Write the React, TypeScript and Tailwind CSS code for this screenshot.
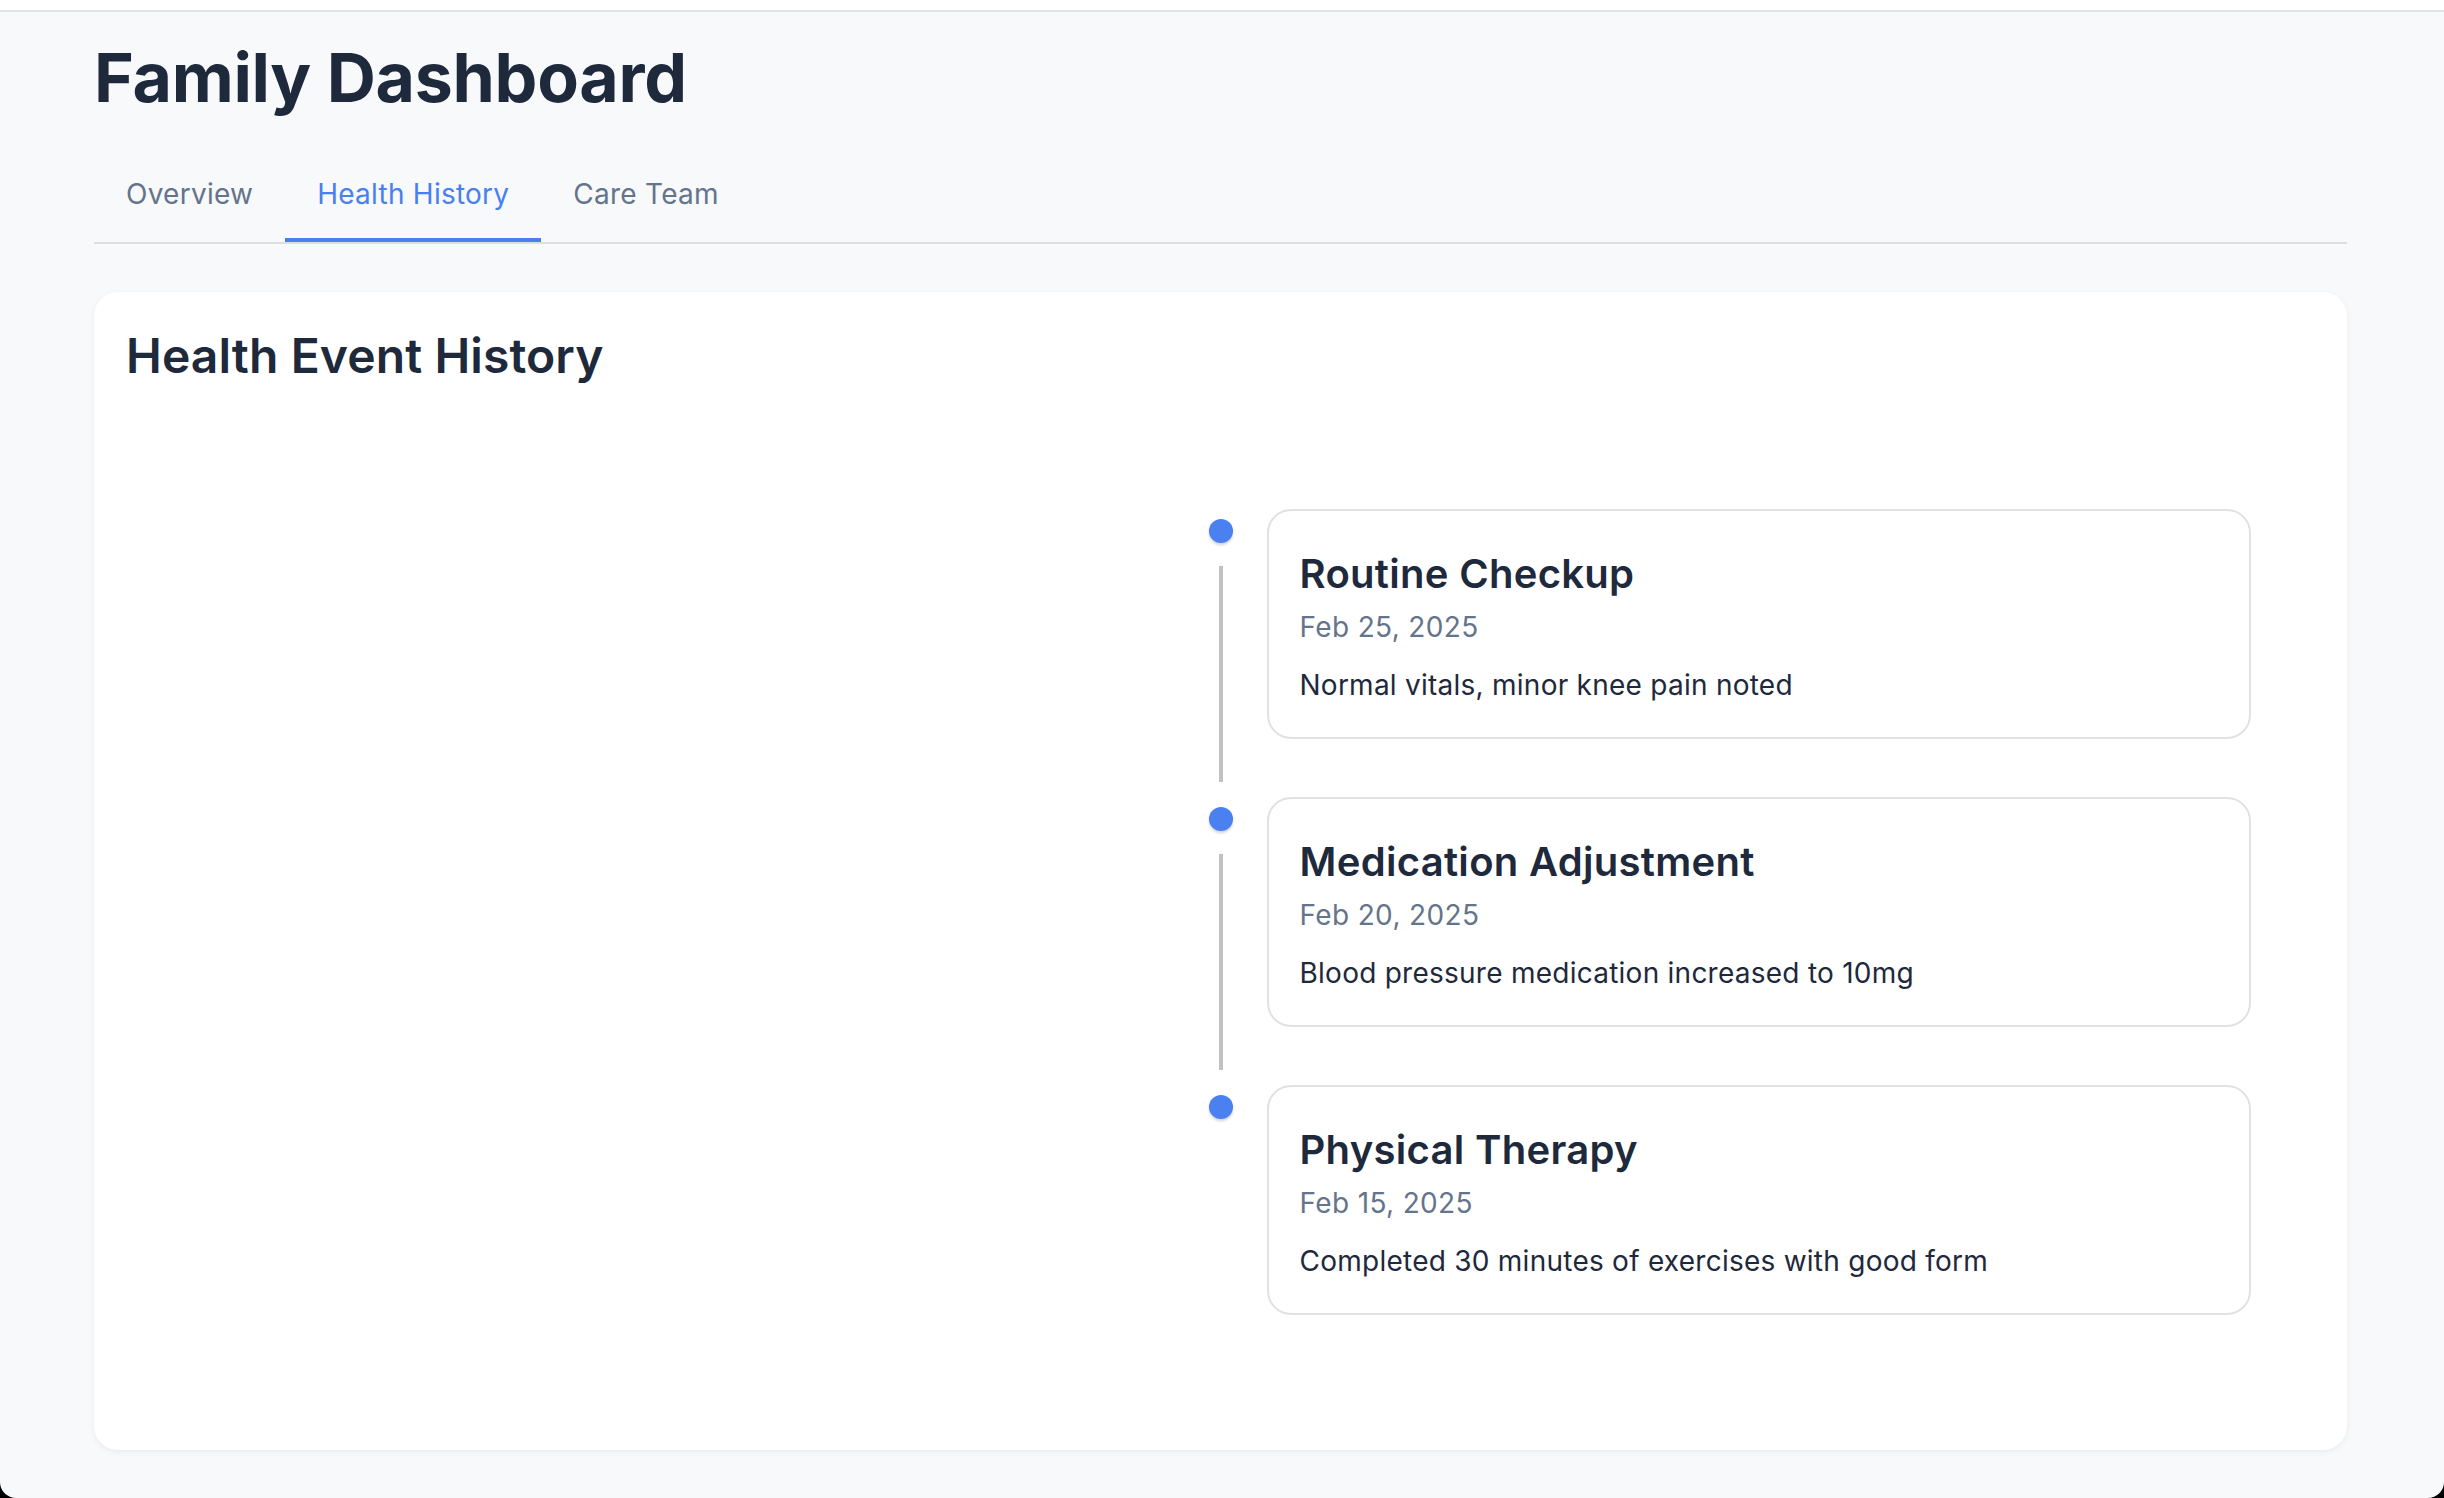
import { useState } from "react";

interface HealthEvent {
  id: number;
  title: string;
  date: string;
  note: string;
}

const events: HealthEvent[] = [
  { id: 1, title: "Routine Checkup", date: "Feb 25, 2025", note: "Normal vitals, minor knee pain noted" },
  { id: 2, title: "Medication Adjustment", date: "Feb 20, 2025", note: "Blood pressure medication increased to 10mg" },
  { id: 3, title: "Physical Therapy", date: "Feb 15, 2025", note: "Completed 30 minutes of exercises with good form" },
];

const tabs = ["Overview", "Health History", "Care Team"];

export default function App() {
  const [activeTab, setActiveTab] = useState("Health History");

  return (
    <div className="min-h-screen bg-black font-['Inter','Noto_Sans',sans-serif]">
      <div className="min-h-screen bg-[#f8f9fb] rounded-b-[16px] overflow-hidden">
        <div className="h-[12px] bg-white border-b-2 border-[#e3e4e6]" />

        <main className="pl-[94px] pr-[97px] pt-[25px] pb-[47px]">
          <h1 className="text-[68px] leading-[80px] font-bold text-[#1e293b] tracking-[-0.3px]">
            Family Dashboard
          </h1>

          {/* tabs */}
          <nav className="mt-[33px] flex border-b-2 border-[#dcdee2]">
            {tabs.map((tab) => (
              <button
                key={tab}
                onClick={() => setActiveTab(tab)}
                className={
                  activeTab === tab
                    ? "px-[32px] pt-[24px] pb-[24px] text-[28px] leading-[40px] tracking-[0.25px] text-[#4a80ee] border-b-4 border-[#4a80ee]"
                    : "px-[32px] pt-[24px] pb-[24px] text-[28px] leading-[40px] tracking-[0.25px] text-[#64748b] border-b-4 border-transparent"
                }
              >
                {tab}
              </button>
            ))}
          </nav>

          <section className="mt-[48px] bg-white rounded-[24px] shadow-[0_2px_6px_rgba(15,23,42,0.06)] p-[32px]">
            <h2 className="text-[48px] leading-[64px] font-semibold text-[#1e293b] tracking-[0.1px]">
              Health Event History
            </h2>

            <div className="mt-[121px] mb-[103px] flex flex-col gap-[58px]">
              {events.map((ev, i) => (
                <div key={ev.id} className="grid grid-cols-2">
                  <div />
                  <div className="relative pl-[46px] pr-[64px]">
                    <span className="absolute left-0 top-[10px] -translate-x-1/2 w-[24px] h-[24px] rounded-full bg-[#4a80f0] shadow-[0_2px_3px_rgba(0,0,0,0.18)]" />
                    {i < events.length - 1 && (
                      <span className="absolute left-0 top-[57px] -translate-x-1/2 w-[4px] h-[216px] bg-[#c2c2c2]" />
                    )}
                    <div className="border-2 border-[#e2e2e2] rounded-[24px] pl-[31px] pr-[32px] pt-[35px] pb-[32px]">
                      <h3 className="text-[40px] leading-[56px] font-semibold text-[#1e293b] tracking-[0.3px]">
                        {ev.title}
                      </h3>
                      <p className="mt-[5px] text-[28px] leading-[40px] text-[#64748b] tracking-[0.35px]">
                        {ev.date}
                      </p>
                      <p className="mt-[18px] text-[28px] leading-[40px] text-[#1e293b] tracking-[0.25px]">
                        {ev.note}
                      </p>
                    </div>
                  </div>
                </div>
              ))}
            </div>
          </section>
        </main>
      </div>
    </div>
  );
}
